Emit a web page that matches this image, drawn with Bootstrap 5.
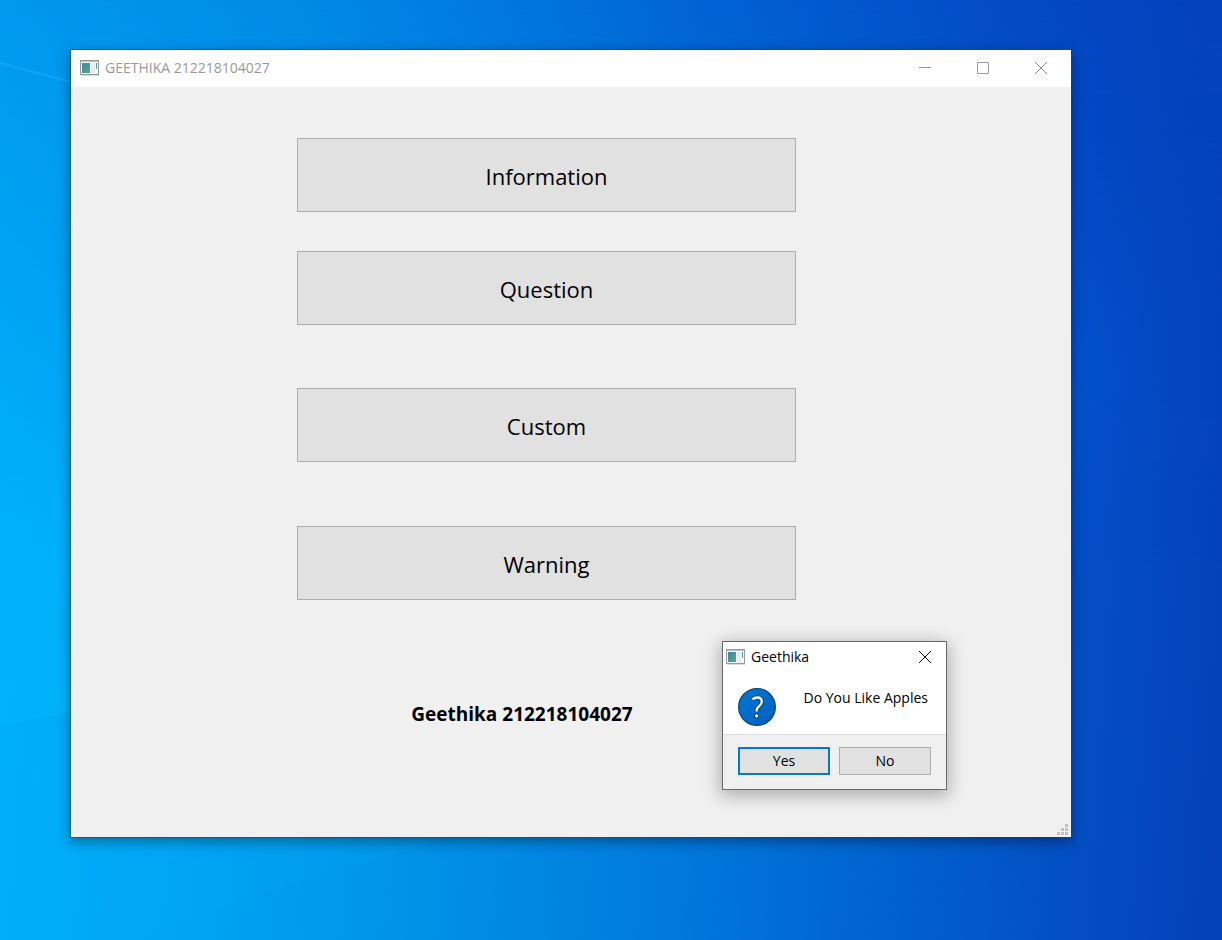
<!DOCTYPE html>
<html lang="en">
<head>
<meta charset="utf-8">
<meta name="viewport" content="width=device-width, initial-scale=1">
<title>GEETHIKA 212218104027</title>
<link href="https://cdn.jsdelivr.net/npm/bootstrap@5.3.0/dist/css/bootstrap.min.css" rel="stylesheet">
<style>
  body { font-family: "Open Sans", "Noto Sans", sans-serif; color: #000; }
  .desktop {
    padding: 50px 151px 103px 71px;
    isolation: isolate;
    background:
      radial-gradient(ellipse 150px 260px at 87% 36%, rgba(4,92,236,.55), rgba(4,88,226,.15) 55%, rgba(4,88,226,0)),
      linear-gradient(94deg, #00b2fb 0%, #00a6f4 17%, #0097ea 33%, #007ddf 54%, #0064d1 72%, #044ec4 88%, #0440b8 100%);
  }
  .desktop::before {
    content: ""; position: absolute; inset: 0; z-index: -1;
    background: linear-gradient(92deg, #0098f0 0%, #008ae6 24%, #007be0 37%, #0064d4 55%, #0350c8 74%, #0345c0 88%, #0341ba 100%);
    mask-image: linear-gradient(#000, transparent 60%);
    -webkit-mask-image: linear-gradient(#000, transparent 60%);
  }
  .rays { z-index: -1; }
  .app-window { background: #f0f0f0; box-shadow: 0 0 0 1px rgba(40,60,90,.5), 0 4px 12px 1px rgba(0,0,0,.36); }
  .title-strip { height: 37px; font-size: 14px; line-height: 20px; color: #999; padding: 0 1px 1px 9px; }
  .caption-text { margin-left: 6px; }
  .caption-btn { border: 0; background: none; padding: 0; color: inherit; display: flex; align-items: center; justify-content: center; }
  .title-strip .caption-btn { width: 58px; height: 36px; }
  .choices { padding: 51px 275px 0 226px; }
  .flat-btn { background: #e1e1e1; border: 1px solid #adadad; color: #000; padding: 0; }
  .flat-btn:hover { background: #e5f1fb; border-color: #0078d7; }
  .choice { height: 74px; font-size: 22px; line-height: 32px; padding-top: 2px; }
  .gap-short { margin-top: 39px; }
  .gap-mid { margin-top: 63px; }
  .gap-long { margin-top: 64px; }
  .signature { padding: 100px 98px 109px 0; font-size: 19px; line-height: 28px; font-weight: 700; }
  .size-grip { right: 3px; bottom: 1px; }
  .message-box { right: 124px; bottom: 47px; width: 225px; border: 1px solid #686868; background: #f0f0f0; box-shadow: 0 4px 16px 2px rgba(0,0,0,.28); font-size: 14px; line-height: 20px; }
  .box-title { height: 31px; padding: 0 0 1px 3px; }
  .box-title .caption-btn { width: 42px; height: 30px; }
  .box-body { height: 62px; padding: 15px 18px 0 15px; border-bottom: 1px solid #dfdfdf; }
  .box-actions { padding: 12px 15px 14px; gap: 9px; }
  .box-actions .flat-btn { height: 28px; line-height: 24px; }
  .box-actions .default-btn { border: 2px solid #0078d7; }
</style>
</head>
<body>
<svg width="0" height="0" class="position-absolute" aria-hidden="true">
  <defs>
    <linearGradient id="pane" x1="0" y1="0" x2="1" y2="1"><stop offset="0" stop-color="#4580a8"/><stop offset="1" stop-color="#54b07c"/></linearGradient>
    <linearGradient id="side" x1="0" y1="0" x2="0" y2="1"><stop offset="0" stop-color="#4a86c4"/><stop offset="1" stop-color="#5aae88"/></linearGradient>
    <linearGradient id="disc" x1="0" y1="0" x2="1" y2="1"><stop offset="0" stop-color="#0078d7"/><stop offset="1" stop-color="#005fbd"/></linearGradient>
    <linearGradient id="beam" x1="0" y1="0" x2="0" y2="1"><stop offset="0" stop-color="#00b8ff" stop-opacity="0"/><stop offset="1" stop-color="#00b8ff" stop-opacity=".45"/></linearGradient>
    <symbol id="app-icon" viewBox="0 0 19 16">
      <rect x=".5" y=".5" width="18" height="14" fill="#f3f4f6" stroke="#929a9f"/>
      <path d="M1 1.500h17" stroke="#bac4cb"/>
      <rect x="2" y="3" width="8" height="10" fill="url(#pane)"/>
      <path d="M11 3h4v10h-4z" fill="#e9eaee"/>
      <path d="M16 3h1v6h-1z" fill="url(#side)"/>
      <path d="M1 15.500h18" stroke="#d7dade"/>
    </symbol>
  </defs>
</svg>
<div class="desktop position-relative min-vh-100 overflow-hidden">
  <svg class="rays position-absolute top-0 start-0 w-100 h-100" viewBox="0 0 1222 940" preserveAspectRatio="none" aria-hidden="true">
    <path d="M0 63L75 83" stroke="#16a5ff" stroke-width="2" opacity=".8"/>
    <path d="M0 724L75 713V300H0Z" fill="url(#beam)"/>
    <path d="M115 940L450 837L780 837L0 837V940Z" fill="#00b0ff" opacity=".1"/>
  </svg>
  <main class="app-window position-relative">
    <header class="title-strip bg-white d-flex align-items-center">
      <svg width="19" height="16" aria-hidden="true"><use href="#app-icon"/></svg>
      <span class="caption-text me-auto">GEETHIKA 212218104027</span>
      <button class="caption-btn" type="button" aria-label="Minimize"><svg width="12" height="12"><path d="M0 5.500h12" stroke="#999"/></svg></button>
      <button class="caption-btn" type="button" aria-label="Maximize"><svg width="12" height="12"><path d="M.5.5h11v11H.5z" fill="none" stroke="#999"/></svg></button>
      <button class="caption-btn" type="button" aria-label="Close"><svg width="12" height="12"><path d="M0 0l12 12M12 0L0 12" stroke="#888"/></svg></button>
    </header>
    <div class="choices d-flex flex-column">
      <button type="button" class="flat-btn choice">Information</button>
      <button type="button" class="flat-btn choice gap-short">Question</button>
      <button type="button" class="flat-btn choice gap-mid">Custom</button>
      <button type="button" class="flat-btn choice gap-long">Warning</button>
    </div>
    <div class="signature text-center">Geethika 212218104027</div>
    <svg class="size-grip position-absolute" width="12" height="12" fill="#bfbfbf" aria-hidden="true"><path d="M9 0h3v3H9zM5 4h3v3H5zM9 4h3v3H9zM1 8h3v3H1zM5 8h3v3H5zM9 8h3v3H9z"/></svg>
    <section class="message-box position-absolute" role="dialog" aria-labelledby="box-name" aria-describedby="box-text">
      <div class="box-title bg-white d-flex align-items-center">
        <svg width="19" height="16" aria-hidden="true"><use href="#app-icon"/></svg>
        <span id="box-name" class="caption-text me-auto">Geethika</span>
        <button class="caption-btn" type="button" aria-label="Close"><svg width="12" height="12"><path d="M0 0l12 12M12 0L0 12" stroke="#000"/></svg></button>
      </div>
      <div class="box-body bg-white d-flex align-items-start justify-content-between">
        <svg width="38" height="38" viewBox="0 0 38 38" aria-hidden="true">
          <circle cx="19" cy="19" r="18.400" fill="url(#disc)" stroke="#14466f" stroke-width="1.200"/>
          <path d="M14.500 11.300Q16.600 9.500 19.200 9.500Q23.800 9.500 23.800 13.500Q23.800 16 21.200 18.200Q18.600 20.300 18.600 22.500V23.600" fill="none" stroke="#123f68" stroke-width="4.200"/>
          <circle cx="18.600" cy="27.800" r="2.500" fill="#123f68"/>
          <path d="M14.500 11.300Q16.600 9.500 19.200 9.500Q23.800 9.500 23.800 13.500Q23.800 16 21.200 18.200Q18.600 20.300 18.600 22.500V23.600" fill="none" stroke="#fff" stroke-width="2.300"/>
          <circle cx="18.600" cy="27.800" r="1.600" fill="#fff"/>
        </svg>
        <span id="box-text" class="text-nowrap">Do You Like Apples</span>
      </div>
      <div class="box-actions d-flex">
        <button type="button" class="flat-btn default-btn flex-fill w-50">Yes</button>
        <button type="button" class="flat-btn flex-fill w-50">No</button>
      </div>
    </section>
  </main>
</div>
<script src="https://cdn.jsdelivr.net/npm/bootstrap@5.3.0/dist/js/bootstrap.bundle.min.js"></script>
</body>
</html>
